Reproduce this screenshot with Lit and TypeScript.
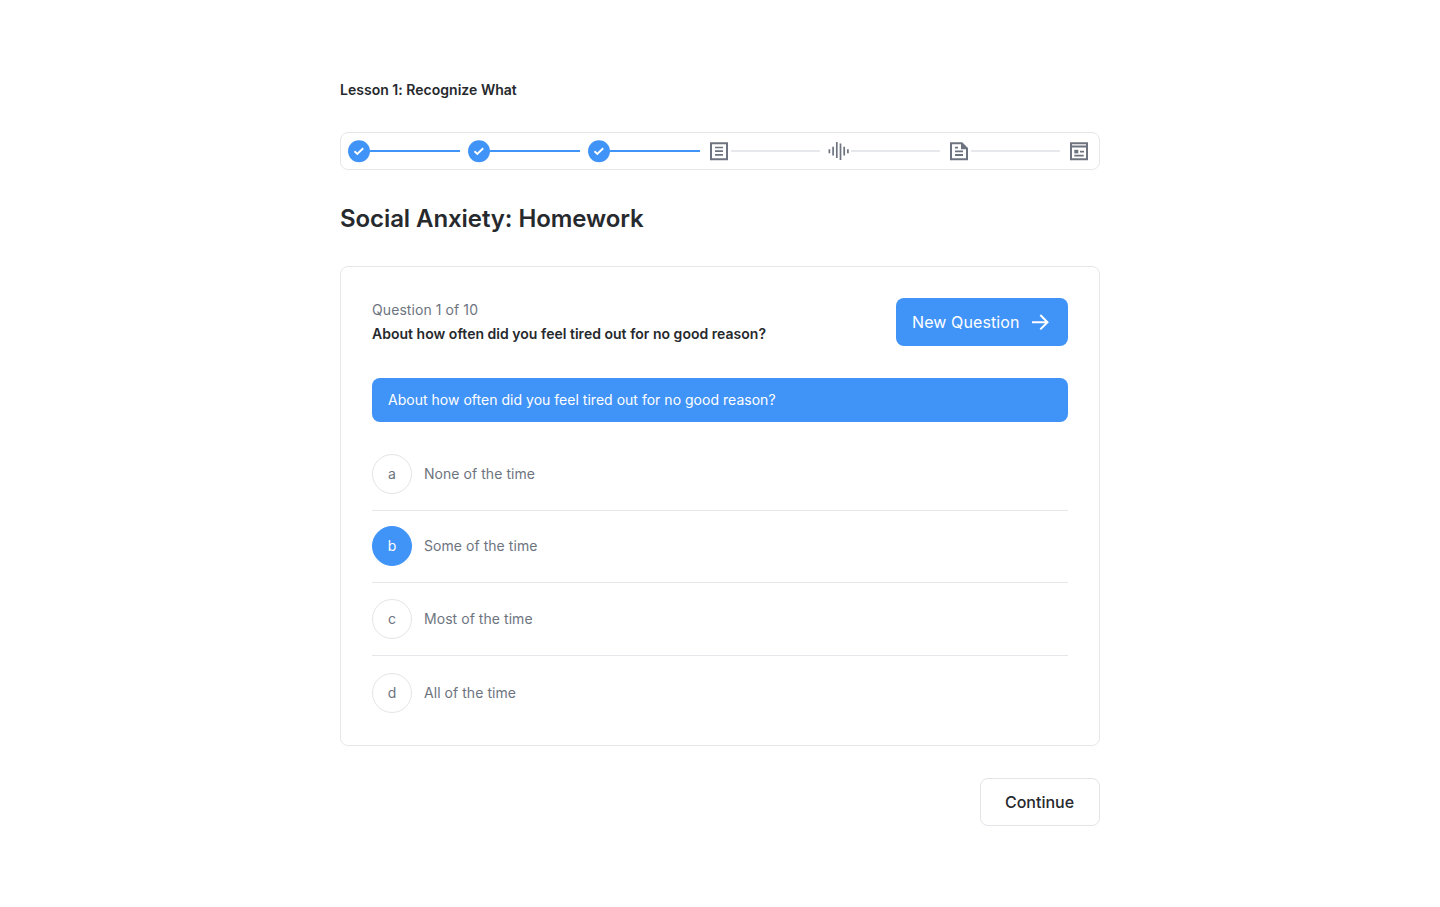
import { LitElement, html, css, svg, nothing } from "lit";
import { customElement, state } from "lit/decorators.js";
import { classMap } from "lit/directives/class-map.js";

const icons = {
  done: svg`<circle cx="12" cy="12.2" r="11" fill="#4093f7"/><path d="M7.5 12.2l2.8 2.7 5.9-5.7" fill="none" stroke="#fff" stroke-width="1.9"/>`,
  list: svg`<path d="M4 4.2h16v16H4z" fill="none" stroke="#6d7480" stroke-width="2"/><path d="M8 8.5h8M8 12.2h8M8 15.9h8" stroke="#6d7480" stroke-width="1.7"/>`,
  audio: svg`<path d="M2.4 10.2v4M6.1 7.8v8.8M9.8 3v16M13.5 4.5V21M17.2 7.8v8.8M20.9 10.2v4" stroke="#6d7480" stroke-width="1.7"/>`,
  file: svg`<path d="M4 4.2h10.8L20 9.4v10.8H4z" fill="none" stroke="#6d7480" stroke-width="2"/><path d="M14 3.7v6.5h6.5z" fill="#6d7480"/><path d="M8 8.6h3M8 12.4h8M8 16h8" stroke="#6d7480" stroke-width="1.8"/>`,
  web: svg`<path d="M4 4.2h16v16H4zM4 7.6h16" fill="none" stroke="#6d7480" stroke-width="2"/><path d="M7.3 10.8h4v3.6h-4z" fill="#6d7480"/><path d="M13 12.6h4M7.3 16.6h9.4" stroke="#6d7480" stroke-width="1.7"/>`,
};
type IconName = keyof typeof icons;

@customElement("app-root")
export class AppRoot extends LitElement {
  @state() private selected = "b";

  private steps: IconName[] = ["done", "done", "done", "list", "audio", "file", "web"];
  private answers = [
    ["a", "None of the time"],
    ["b", "Some of the time"],
    ["c", "Most of the time"],
    ["d", "All of the time"],
  ];

  static styles = css`
    :host {
      display: block;
      min-height: 907px;
      box-sizing: border-box;
      padding-top: 80px;
      background: #fff;
      color: #26292d;
      font: 400 14px/20px Inter, sans-serif;
      letter-spacing: 0.02px;
    }
    * { box-sizing: border-box; }
    svg { display: block; flex: none; }
    main { display: flex; flex-direction: column; width: 760px; margin: 0 auto; }
    h1, h2, p, ul { margin: 0; padding: 0; }
    .lesson { font-size: 14px; line-height: 20px; font-weight: 600; }
    .steps {
      display: flex; align-items: center; height: 38px; margin-top: 32px;
      padding: 0 8px 0 6px; border: 1px solid #e6e7ea; border-radius: 8px;
    }
    .step { display: flex; align-items: center; width: 120px; }
    .step:last-child { width: 24px; }
    .line { width: 89px; height: 2px; background: #e7e8eb; }
    .line.on { width: 90px; margin-left: -1px; background: #4093f7; }
    .title {
      margin-top: 33px; font-size: 24px; line-height: 32px;
      font-weight: 600; letter-spacing: -0.08px;
    }
    .card {
      margin-top: 31px; height: 480px; padding: 31px;
      border: 1px solid #e6e7ea; border-radius: 8px;
    }
    .head { display: flex; justify-content: space-between; align-items: center; height: 48px; }
    .count { line-height: 24px; color: #6d7480; letter-spacing: 0.08px; }
    .question { font-size: 14px; line-height: 24px; font-weight: 600; }
    button { font: inherit; cursor: pointer; }
    .new {
      display: flex; align-items: center; gap: 8px; width: 172px; height: 48px;
      padding: 0 16px; border: 0; border-radius: 8px; letter-spacing: 0.1px;
      background: #4093f7; color: #fff; font-size: 16px; white-space: nowrap;
    }
    .banner {
      height: 44px; margin-top: 32px; padding: 0 16px; line-height: 44px;
      border-radius: 8px; background: #4093f7; color: #fff;
    }
    .answers { list-style: none; margin-top: 16px; }
    .answer {
      display: flex; align-items: center; gap: 12px; height: 73px;
      border-bottom: 1px solid #e6e7ea; color: #6d7480; cursor: pointer;
      letter-spacing: 0.05px;
    }
    .answer + .answer { height: 72px; padding-bottom: 1px; }
    .answer:nth-child(3) { height: 73px; padding: 0; }
    .answer:last-child { height: 74px; padding: 0; border: 0; }
    .letter {
      display: flex; align-items: center; justify-content: center;
      width: 40px; height: 40px; border: 1px solid #e3e4e7; border-radius: 50%;
    }
    .selected .letter { background: #4093f7; border-color: #4093f7; color: #fff; }
    .continue {
      align-self: flex-end; width: 120px; height: 48px; margin-top: 32px; padding: 0 1px 0 0;
      background: #fff; border: 1px solid #e3e4e7; border-radius: 8px;
      color: #26292d; font-size: 16px; font-weight: 500;
    }
  `;

  render() {
    return html`<main>
      <p class="lesson">Lesson 1: Recognize What</p>
      <div class="steps">
        ${this.steps.map((name, i) => html`<div class="step">
          <svg width="24" height="24" viewBox="0 0 24 24">${icons[name]}</svg>
          ${i < this.steps.length - 1
            ? html`<div class=${classMap({ line: true, on: name === "done" })}></div>`
            : nothing}
        </div>`)}
      </div>
      <h1 class="title">Social Anxiety: Homework</h1>
      <section class="card">
        <div class="head">
          <div>
            <p class="count">Question 1 of 10</p>
            <h2 class="question">About how often did you feel tired out for no good reason?</h2>
          </div>
          <button class="new"><span>New Question</span>
            <svg width="24" height="24" viewBox="0 0 24 24" fill="none" stroke="#fff" stroke-width="2"><path d="M4 12.2h15M12.3 5l7.2 7.2-7.2 7.2"/></svg>
          </button>
        </div>
        <p class="banner">About how often did you feel tired out for no good reason?</p>
        <ul class="answers">
          ${this.answers.map(([key, label]) => html`<li
            class=${classMap({ answer: true, selected: key === this.selected })}
            @click=${() => (this.selected = key)}
          ><span class="letter">${key}</span><span>${label}</span></li>`)}
        </ul>
      </section>
      <button class="continue">Continue</button>
    </main>`;
  }
}
